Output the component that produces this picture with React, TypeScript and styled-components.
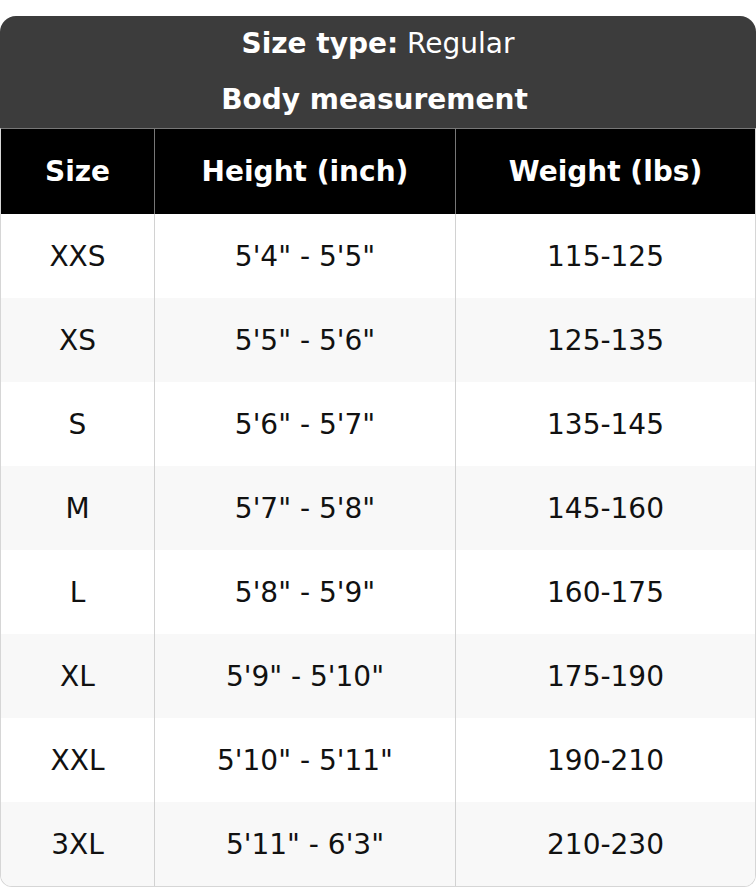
import styled, { createGlobalStyle } from "styled-components";

const GlobalStyle = createGlobalStyle`
  body {
    margin: 0;
    padding-top: 16px;
    background: #fff;
    font-family: "DejaVu Sans", "Liberation Sans", sans-serif;
  }
`;

const Card = styled.div`
  width: 756px;
`;

const Title = styled.div`
  background: #3c3c3c;
  color: #fff;
  border-radius: 16px 16px 0 0;
  text-align: center;
  font-size: 28px;
`;

const TitleLine = styled.div<{ $nudge?: number }>`
  height: 56px;
  line-height: 56px;
  padding-right: ${(p) => p.$nudge ?? 0}px;
`;

const Table = styled.div`
  display: grid;
  grid-template-columns: 154px 301px 1fr;
  border: 1px solid #d6d6d6;
  border-top: 1px solid #777;
  border-radius: 0 0 12px 12px;
  overflow: hidden;
`;

const HeadCell = styled.div`
  height: 85px;
  background: #000;
  color: #fff;
  font-size: 28px;
  font-weight: bold;
  display: flex;
  align-items: center;
  justify-content: center;
  box-sizing: border-box;
  border-right: 1px solid #777;

  &:nth-child(3) {
    border-right: none;
  }
`;

const Cell = styled.div<{ $shade: boolean; $last: boolean }>`
  height: 84px;
  background: ${(p) => (p.$shade ? "#f8f8f8" : "#fff")};
  color: #111;
  font-size: 28px;
  display: flex;
  align-items: center;
  justify-content: center;
  box-sizing: border-box;
  border-right: ${(p) => (p.$last ? "none" : "1px solid #d2d2d2")};
`;

const rows = [
  ["XXS", `5'4" - 5'5"`, "115-125"],
  ["XS", `5'5" - 5'6"`, "125-135"],
  ["S", `5'6" - 5'7"`, "135-145"],
  ["M", `5'7" - 5'8"`, "145-160"],
  ["L", `5'8" - 5'9"`, "160-175"],
  ["XL", `5'9" - 5'10"`, "175-190"],
  ["XXL", `5'10" - 5'11"`, "190-210"],
  ["3XL", `5'11" - 6'3"`, "210-230"],
];

const App = () => {
  return (
    <>
      <GlobalStyle />
      <Card>
        <Title>
          <TitleLine>
            <b>Size type:</b> Regular
          </TitleLine>
          <TitleLine $nudge={7}>
            <b>Body measurement</b>
          </TitleLine>
        </Title>
        <Table>
          <HeadCell>Size</HeadCell>
          <HeadCell>Height (inch)</HeadCell>
          <HeadCell>Weight (lbs)</HeadCell>
          {rows.map((row, i) =>
            row.map((val, j) => (
              <Cell key={`${i}-${j}`} $shade={i % 2 === 1} $last={j === 2}>
                {val}
              </Cell>
            ))
          )}
        </Table>
      </Card>
    </>
  );
};

export default App;
